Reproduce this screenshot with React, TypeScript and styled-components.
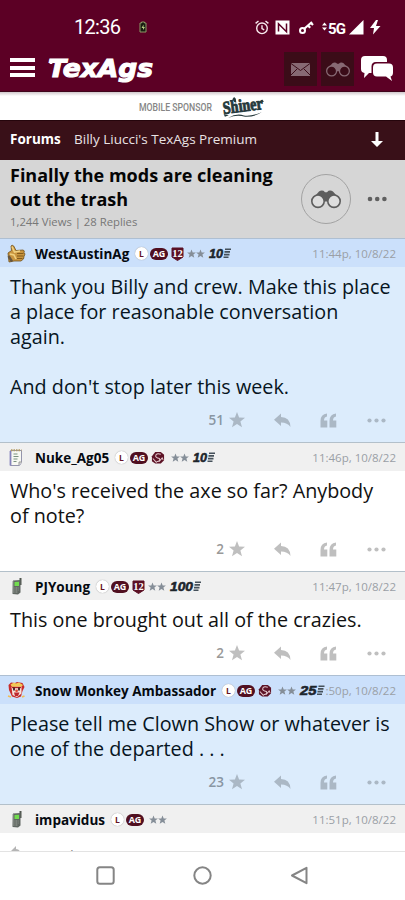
import React from "react";
import styled, { createGlobalStyle } from "styled-components";

const Global = createGlobalStyle`
  * { box-sizing: border-box; }
  body { margin: 0; background: #fff; font-family: "Open Sans", "Noto Sans", sans-serif; }
  svg { display: block; flex: none; overflow: visible; }
`;

const Screen = styled.main`
  width: 405px;
  height: 900px;
  overflow: hidden;
  display: flex;
  flex-direction: column;
  background: #fff;
`;
const StatusBar = styled.div`
  height: 48px;
  flex: none;
  display: flex;
  align-items: center;
  padding: 6px 22px 0 74px;
  background: #5c0025;
  color: #fff;
`;
const Clock = styled.span`
  width: 65px;
  font: 400 20px/24px Roboto, sans-serif;
  letter-spacing: -0.7px;
`;
const StatusIcons = styled.div`
  margin-left: auto;
  display: flex;
  align-items: center;
`;
const Network = styled.span`
  font: 700 15px/16px Roboto, sans-serif;
  width: 21px;
  letter-spacing: -0.8px;
  padding-top: 3px;
`;
const AppBar = styled.header`
  height: 43px;
  flex: none;
  display: flex;
  align-items: center;
  padding: 0 9px 2px 10px;
  background: #5c0025;
`;
const MenuButton = styled.button`
  width: 25px;
  height: 19px;
  padding: 0;
  margin-top: -2px;
  border: 0;
  background: none;
  display: flex;
  flex-direction: column;
  justify-content: space-between;
`;
const MenuLine = styled.span`
  display: block;
  width: 25px;
  height: 4px;
  background: #fff;
`;
const Logo = styled.svg`
  margin: 2px 0 0 12px;
`;
const AppTile = styled.button`
  width: 33px;
  height: 34px;
  border: 0;
  padding: 0;
  display: grid;
  place-items: center;
  background: #3b0c18;
  margin: 1px 4px 0 0;
`;
const AppActions = styled.div`
  margin-left: auto;
  display: flex;
  align-items: center;
`;
const ChatIcon = styled.svg`
  margin-left: 2px;
`;
const Sponsor = styled.div`
  height: 29px;
  flex: none;
  display: flex;
  align-items: center;
  padding: 3px 0 0 139px;
  border-top: 1px solid #40051c;
  background: linear-gradient(#d0c8cb, #fff 4px);
`;
const Crumbs = styled.nav`
  height: 40px;
  flex: none;
  display: flex;
  align-items: center;
  padding: 0 21px 3px 10px;
  background: #391018;
  border-top: 1px solid #25050c;
  color: #e9e2e4;
  font-size: 13.5px;
`;
const CrumbRoot = styled.b`
  width: 64px;
  color: #fff;
  font-size: 13.5px;
`;
const DownArrow = styled.svg`
  margin-left: auto;
`;
const Topic = styled.section`
  height: 78px;
  flex: none;
  display: flex;
  background: #d6d6d6;
  padding: 4px 18px 0 10px;
`;
const TopicText = styled.div`
  width: 291px;
`;
const Title = styled.h1`
  margin: 0;
  font-size: 18px;
  line-height: 23.5px;
  font-weight: 700;
  color: #050505;
  white-space: nowrap;
`;
const Stats = styled.p`
  margin: 2px 0 0;
  font-size: 11.3px;
  line-height: 17px;
  color: #777;
`;
const Follow = styled.button`
  width: 50px;
  height: 50px;
  margin-top: 10px;
  border: 1px solid #a2a2a2;
  border-radius: 50%;
  background: none;
  padding: 0;
  display: grid;
  place-items: center;
`;
const TopicMore = styled.svg`
  margin: 32px 0 0 16px;
`;
const Posts = styled.div`
  flex: 1;
  min-height: 0;
  overflow: hidden;
`;
const PostCard = styled.article<{ $tint?: boolean }>`
  background: ${(p) => (p.$tint ? "#dcecfc" : "#fff")};
  color: ${(p) => (p.$tint ? "#071522" : "#111")};
`;
const PostHead = styled.header<{ $tint?: boolean }>`
  height: 29px;
  display: flex;
  align-items: center;
  padding: 1px 9px 0 7px;
  border-top: 1px solid ${(p) => (p.$tint ? "#aebfd2" : "#b3c0ca")};
  background: ${(p) => (p.$tint ? "#cbe0fb" : "#f0f0f0")};
  > * { flex: none; }
`;
const Avatar = styled.div`
  width: 28px;
`;
const Name = styled.b<{ $w: number }>`
  width: ${(p) => p.$w}px;
  font-size: 13.5px;
  color: #050a10;
  white-space: nowrap;
`;
const Level = styled.span`
  width: 13px;
  height: 13px;
  border-radius: 50%;
  background: #fff;
  color: #651527;
  font: 700 8.5px/13px "Open Sans", sans-serif;
  text-align: center;
  margin: 0 2px 0 6px;
  box-shadow: 0 0 1px #888;
`;
const Ag = styled.span`
  width: 18px;
  height: 12px;
  border-radius: 6px;
  background: #500f20;
  color: #fff;
  font: 700 9px/12px "Open Sans", sans-serif;
  text-align: center;
  margin-right: 3px;
`;
const Stars = styled.svg<{ $gap: number }>`
  margin-left: ${(p) => p.$gap}px;
`;
const Streak = styled.svg`
  margin: 0 0 0 4px;
`;
const Time = styled.time`
  margin-left: auto;
  font-size: 11.5px;
  color: #9a9fa6;
  white-space: nowrap;
`;
const Body = styled.div`
  padding: 7px 0 0 10px;
  font-size: 19.75px;
  line-height: 25px;
  white-space: pre;
`;
const Actions = styled.footer<{ $tint?: boolean }>`
  height: 43px;
  display: flex;
  align-items: center;
  padding: 0 0 1px 190px;
  color: ${(p) => (p.$tint ? "#abb8c5" : "#bfbfbf")};
`;
const Count = styled.span<{ $tint?: boolean }>`
  width: 34px;
  margin-right: 5px;
  text-align: right;
  font-size: 13.5px;
  font-weight: 600;
  color: ${(p) => (p.$tint ? "#8996a3" : "#999")};
`;
const ActionIcon = styled.svg<{ $gap: number }>`
  margin-left: ${(p) => p.$gap}px;
`;
const ReplyPreview = styled.div`
  height: 40px;
  padding: 12px 0 0 11px;
  display: flex;
  gap: 8px;
  background: #fff;
  color: #888;
  font-size: 15px;
  line-height: 20px;
`;
const SystemNav = styled.nav`
  height: 49px;
  flex: none;
  display: flex;
  align-items: center;
  justify-content: center;
  gap: 78px;
  padding-bottom: 2px;
  background: #fff;
  border-top: 1px solid #e3e3e3;
`;

const Binoculars = ({ w, fill, hole }: { w: number; fill: string; hole: string }) => (
  <svg width={w} height={w * 0.62} viewBox="0 0 30 18.6">
    <path fill={fill} d="M0.5 10 8 1.500Q10 0 12.500 .8L14 2.300h2L17.500 .8Q20 0 22 1.500L29.500 10 22 14 15.800 9h-1.600L8 14Z" />
    <circle cx="7" cy="11.200" r="6.200" fill={hole} stroke={fill} strokeWidth="1.600" />
    <circle cx="23" cy="11.200" r="6.200" fill={hole} stroke={fill} strokeWidth="1.600" />
    <path fill={fill} d="M12 7h6l-1.500 4.500h-3z" />
  </svg>
);

const Thumb = () => (
  <svg width="19" height="19" viewBox="0 0 19 19">
    <path d="M1 9 4.500 6.500 4 2Q5 .5 6.700 2L9 6.500 16 6Q18 6.500 17 8.500L18 10 17 12.500 16.500 15 14 17H7L2 18Z" fill="#c9953f" stroke="#71501c" strokeWidth=".8" />
    <path d="M5 2.500 7.500 8 13 7M3 10l4 1 2 4" stroke="#f0d080" strokeWidth="1.600" fill="none" />
    <path d="M10 9.500h6.500M10 12h6.500M10 14.500h5.500" stroke="#7b5519" strokeWidth=".9" />
    <path d="M1.500 12 5 17.500" stroke="#66563f" strokeWidth="2.400" />
  </svg>
);
const Notepad = () => (
  <svg width="18" height="19" viewBox="0 0 18 19">
    <path d="M3.500 2.500h11v12l-2 3h-9z" fill="#f7f8f2" stroke="#9495ad" />
    <path d="M3.500 3v14.500" stroke="#8582bb" strokeWidth="1.800" />
    <path d="M4 2.300h10.500" stroke="#b29b62" strokeWidth="2" strokeDasharray="1.500 1" />
    <path d="M6.500 6h4M6.500 8.500h5M6.500 11h4M6.500 13.500h3" stroke="#79917e" />
    <path d="M12 17v-3h3" fill="#ddd" stroke="#999" />
  </svg>
);
const Phone = () => (
  <svg width="18" height="19" viewBox="0 0 18 19">
    <path d="M12.500 1h2v7h-2z" fill="#50564f" />
    <path d="M6 3.500 13.500 3v12.500L11 17.500 5.500 17Z" fill="#606762" />
    <path d="M6 4v12" stroke="#989e99" />
    <path d="M7.500 5 12 4.700V9H7.500z" fill="#72dc4e" />
    <path d="M7.500 11h4M7.500 13h4M7.500 15h3.500" stroke="#a0a69f" strokeDasharray="1 .6" />
  </svg>
);
const Clown = () => (
  <svg width="19" height="19" viewBox="0 0 19 19">
    <path d="M1.500 4 4 1.500 8 2 10 1 15.500 2 17.500 6 15.500 10 14 15.500 10 17 5 15.500 2 9Z" fill="#c82b2b" />
    <path d="M3.500 3.500 7 1.500 9 2.500 12 1.500l4 2.500-2 2H5Z" fill="#f3c955" />
    <path d="m4.500 6 10-.5v7L10 16l-4.500-2z" fill="#f5e3db" />
    <path d="M5 6.500h9" stroke="#b62126" strokeWidth="1.400" />
    <path d="M7 6.500v3m5-3v3" stroke="#351315" strokeWidth="1.700" />
    <path d="M7 11.500h5.500L11 15H8z" fill="#bd2930" />
    <circle cx="9.600" cy="9.800" r="1.400" fill="#e14a36" />
    <path d="m1 15 3 1m11 0 2.500-1" stroke="#f0bd59" strokeWidth="1.800" />
  </svg>
);
const Twelve = () => (
  <svg width="13" height="14" viewBox="0 0 13 14">
    <path d="M1 1h11v9L6.500 13.500 1 10Z" fill="#5b1024" stroke="#5b1024" />
    <text x="6.500" y="9.800" textAnchor="middle" fontFamily="Liberation Serif, serif" fontWeight="700" fontSize="10.500" fill="#fff">12</text>
  </svg>
);
const Crest = () => (
  <svg width="14" height="14" viewBox="0 0 15 14">
    <path d="M4.500 .5h6L14 3.500v6L10.500 13h-6L1 10.500V5Z" fill="#5d1326" />
    <path d="M10.500 3Q5 1.500 5 5q0 1.500 4 2.500 1.500 3-3 3.500M2 7.500 6 12M8.500 11l3.500-4 1 2" fill="none" stroke="#e4c9ce" strokeWidth="1.100" />
  </svg>
);
const starPath = "M0-4.500 1.200-1.500 4.400-1.400 1.900.6 2.800 3.700 0 1.900-2.800 3.700-1.900.6-4.400-1.400-1.200-1.500Z";

/* Slanted digits followed by speed lines for the streak counter. */
const StreakBadge = ({ n }: { n: string }) => {
  const digits = n === "100" ? 23 : n === "25" ? 16.5 : 14;
  return (
    <Streak width={digits + 8} height="13" viewBox={`0 0 ${digits + 8} 13`}>
      <text x="0" y="11" fontFamily="Liberation Sans, sans-serif" fontWeight="700" fontStyle="italic" fontSize="13.500" fill="#1d252c" stroke="#1d252c" strokeWidth=".6" textLength={digits} lengthAdjust="spacingAndGlyphs">{n}</text>
      <path d={`M${digits + 2} 2.200h6M${digits + 1.5} 4.900h5.500M${digits + 1} 7.600h5.500M${digits + 0.5} 10.300h5`} stroke="#45505a" strokeWidth="1.600" />
    </Streak>
  );
};

type PostData = {
  name: string; w: number; avatar: React.ReactNode; badge?: "twelve" | "crest";
  streak?: string; time: string; tint?: boolean; text?: string; count?: string;
};

const posts: PostData[] = [
  { name: "WestAustinAg", w: 94, avatar: <Thumb />, badge: "twelve", streak: "10", time: "11:44p, 10/8/22", tint: true, text: "Thank you Billy and crew. Make this place\na place for reasonable conversation\nagain.\n\nAnd don't stop later this week.", count: "51" },
  { name: "Nuke_Ag05", w: 74, avatar: <Notepad />, badge: "crest", streak: "10", time: "11:46p, 10/8/22", text: "Who's received the axe so far? Anybody\nof note?", count: "2" },
  { name: "PJYoung", w: 55, avatar: <Phone />, badge: "twelve", streak: "100", time: "11:47p, 10/8/22", text: "This one brought out all of the crazies.", count: "2" },
  { name: "Snow Monkey Ambassador", w: 181, avatar: <Clown />, badge: "crest", streak: "25", time: ":50p, 10/8/22", tint: true, text: "Please tell me Clown Show or whatever is\none of the departed . . .", count: "23" },
  { name: "impavidus", w: 70, avatar: <Phone />, time: "11:51p, 10/8/22" },
];

const Post = ({ p }: { p: PostData }) => (
  <PostCard $tint={p.tint}>
    <PostHead $tint={p.tint}>
      <Avatar>{p.avatar}</Avatar>
      <Name $w={p.w}>{p.name}</Name>
      <Level>L</Level>
      <Ag>AG</Ag>
      {p.badge === "twelve" && <Twelve />}
      {p.badge === "crest" && <Crest />}
      <Stars $gap={p.badge === "twelve" ? 3 : p.badge ? 6 : 2} width="18" height="10" viewBox="0 0 18 10">
        <path d={starPath} transform="translate(4.500 5)" fill="#858e98" />
        <path d={starPath} transform="translate(13.500 5)" fill="#858e98" />
      </Stars>
      {p.streak && <StreakBadge n={p.streak} />}
      <Time>{p.time}</Time>
    </PostHead>
    {p.text && <Body>{p.text}</Body>}
    {p.text && (
      <Actions $tint={p.tint}>
        <Count $tint={p.tint}>{p.count}</Count>
        <svg width="16" height="16" viewBox="0 0 16 16"><path fill="currentColor" d="M8 0 10.100 5.500 16 5.800 11.400 9.500 13 15.300 8 12 3 15.300 4.600 9.500 0 5.800 5.900 5.500Z" /></svg>
        <ActionIcon $gap={29} width="17" height="15" viewBox="0 0 17 15"><path fill="currentColor" d="M0 6.700 7 .5V4Q16 4 16.500 14 13.500 9.500 7 9.500V13Z" /></ActionIcon>
        <ActionIcon $gap={29} width="17" height="15" viewBox="0 0 17 15"><path fill="currentColor" d="M7 .5V3.500Q4 4 4 7.500H7.300V14.500H.5V8Q.5 1 7 .5ZM16 .5V3.500Q13 4 13 7.500H16.300V14.500H9.500V8Q9.500 1 16 .5Z" /></ActionIcon>
        <ActionIcon $gap={30} width="20" height="5" viewBox="0 0 20 5"><g fill="currentColor"><circle cx="2.500" cy="2.500" r="2.100" /><circle cx="9.500" cy="2.500" r="2.100" /><circle cx="16.500" cy="2.500" r="2.100" /></g></ActionIcon>
      </Actions>
    )}
  </PostCard>
);

export default function App() {
  return (
    <Screen>
      <Global />
      <StatusBar>
        <Clock>12:36</Clock>
        <svg width="8" height="12" viewBox="0 0 8 12"><path d="M2.500 1h3v1H7v9H1V2h1.500z" fill="#171b10" stroke="#8b9a66" /><path d="M4.500 3.500 2.500 7H4v2l2-3H4.500z" fill="#b8ce83" /></svg>
        <StatusIcons>
          <svg width="14" height="15" viewBox="0 0 14 15"><g transform="translate(-6 0)" fill="none" stroke="#f8e9ee" strokeWidth="1.400"><circle cx="7" cy="8.300" r="5.300" /><path d="M7 5.300v3.300l2.200 1.300M.6 3.400 3.500 1M13.400 3.400 10.500 1" /></g></svg>
          <svg width="29" height="15" viewBox="0 0 29 15"><g transform="translate(-6 0)"><path fill="#fff" d="M6.500 .5h14v14h-14z" /><path d="M9.500 11.500V3.700l8 8V3.500" fill="none" stroke="#5c0025" strokeWidth="1.500" /></g></svg>
          <svg width="18" height="15" viewBox="0 0 18 15"><g transform="translate(-6 0)"><circle cx="4.500" cy="10.500" r="2.500" fill="none" stroke="#fff" strokeWidth="2" /><path d="m6.500 8.500 7.500-6.500M10 5.500l2.200 2.300M12.500 2.500l2.500 2.500" stroke="#fff" strokeWidth="2.200" /></g></svg>
          <svg width="6" height="15" viewBox="0 0 6 15"><path fill="#fff" d="M0 5.500 2.500 2.500l2.500 3zM0 7.500h5L2.500 10.500z" /></svg>
          <Network>5G</Network>
          <svg width="16" height="15" viewBox="0 0 16 15"><path fill="#fff" d="M0 14.500 14.500 0v14.500z" /></svg>
          <svg width="18" height="15" viewBox="0 0 18 15"><path fill="#fff" d="M11 0 5 8h4l-1 6.500L15.500 6H11l2-6z" /></svg>
        </StatusIcons>
      </StatusBar>
      <AppBar>
        <MenuButton aria-label="Menu"><MenuLine /><MenuLine /><MenuLine /></MenuButton>
        <Logo width="108" height="30" viewBox="0 0 108 30">
          <text x="1" y="22" fill="#fff" stroke="#fff" strokeWidth="1.100" fontFamily="DejaVu Sans, sans-serif" fontWeight="700" fontStyle="italic" fontSize="24.500" textLength="105" lengthAdjust="spacingAndGlyphs">TexAgs</text>
          <path d="M4 4.500 2.500 9H5L6.500 6.500V4.500Z" fill="#fff" />
        </Logo>
        <AppActions>
          <AppTile aria-label="Messages"><svg width="19" height="13" viewBox="0 0 19 13"><path fill="#876973" d="M0 0h19v13H0z" /><path d="m0 .5 9.500 7 9.500-7M0 12l6-6M19 12l-6-6" fill="none" stroke="#3b0c18" /></svg></AppTile>
          <AppTile aria-label="Following"><Binoculars w={24} fill="#876973" hole="#3b0c18" /></AppTile>
          <ChatIcon width="36" height="28" viewBox="0 0 36 28"><path fill="#fff" d="M5 1h18q4 0 4 4v2H16q-4.500 0-4.500 4.500V18H9l-5 5 .5-5Q1 17.500 1 14V5q0-4 4-4Z" /><path fill="#fff" d="M17 8.500h12q4 0 4 4v5q0 3.500-2.500 4L32 26l-6-4.500h-9q-4 0-4-4v-5q0-4 4-4Z" /></ChatIcon>
        </AppActions>
      </AppBar>
      <Sponsor>
        <svg width="134" height="25" viewBox="0 0 134 25">
          <text x="0" y="15.500" fill="#858585" fontFamily="Roboto, sans-serif" fontWeight="500" fontSize="10" textLength="73" lengthAdjust="spacingAndGlyphs">MOBILE SPONSOR</text>
          <g transform="translate(0 1) rotate(-7 104 12)" fill="#263a3d"><text x="84" y="15.500" stroke="#263a3d" strokeWidth=".9" fontFamily="Liberation Serif, serif" fontWeight="700" fontSize="18" textLength="40" lengthAdjust="spacingAndGlyphs">Shiner</text><path d="M88 20q9-4 16-.500 7 2 18-1-8 4-17 2.500-8-3.500-17-1Z" /><path d="M94.500 2l2-2 1.500 2v4l-2-1zM84 15.500l5 2-4 1zM121 8l3-2 1.500 2-2 1z" /></g>
        </svg>
      </Sponsor>
      <Crumbs>
        <CrumbRoot>Forums</CrumbRoot>
        <span>Billy Liucci's TexAgs Premium</span>
        <DownArrow width="14" height="17" viewBox="0 0 14 17"><path fill="#fff" d="M5.500 1h3v9H13l-6 6-6-6h4.500z" /></DownArrow>
      </Crumbs>
      <Topic>
        <TopicText>
          <Title>Finally the mods are cleaning<br />out the trash</Title>
          <Stats>1,244 Views | 28 Replies</Stats>
        </TopicText>
        <Follow aria-label="Follow topic"><Binoculars w={30} fill="#5d5d5d" hole="#dedede" /></Follow>
        <TopicMore width="20" height="6" viewBox="0 0 20 6"><g fill="#606060"><circle cx="3" cy="3" r="2.300" /><circle cx="10.200" cy="3" r="2.300" /><circle cx="17.400" cy="3" r="2.300" /></g></TopicMore>
      </Topic>
      <Posts>
        {posts.map((p) => <Post key={p.name} p={p} />)}
        <ReplyPreview>
          <svg width="10" height="20" viewBox="0 0 10 20"><path fill="#b5b5b5" d="M0 6 5 1v3q5 0 5 8-2-4-5-4v3z" /></svg>
          <span>In reply to WestAustinAg</span>
        </ReplyPreview>
      </Posts>
      <SystemNav>
        <svg width="19" height="19" viewBox="0 0 19 19"><rect x="1.300" y="1.300" width="16.400" height="16.400" rx="2.500" fill="none" stroke="#858585" strokeWidth="2" /></svg>
        <svg width="19" height="19" viewBox="0 0 19 19"><circle cx="9.500" cy="9.500" r="8.200" fill="none" stroke="#858585" strokeWidth="2" /></svg>
        <svg width="19" height="19" viewBox="0 0 19 19"><path d="M16.500 1.800v15.400L2 9.500Z" fill="none" stroke="#858585" strokeWidth="2" strokeLinejoin="round" /></svg>
      </SystemNav>
    </Screen>
  );
}
